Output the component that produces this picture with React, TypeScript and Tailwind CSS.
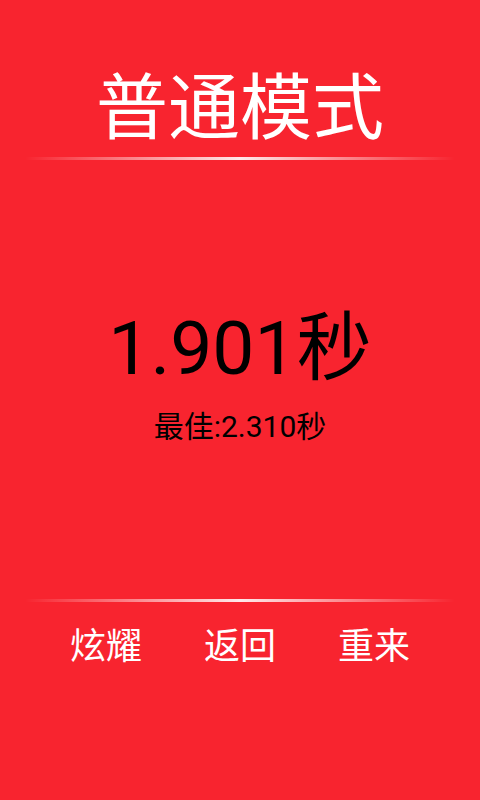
export default function App() {
  const font = { fontFamily: '"Roboto", "Noto Sans CJK SC", sans-serif' };

  return (
    <div
      className="flex h-[800px] w-[480px] flex-col items-center bg-[#f8242f]"
      style={font}
    >
      {/* Title */}
      <h1 className="mt-[69px] text-[72px] leading-[80px] font-normal text-white">
        普通模式
      </h1>
      <div className="mt-[8px] h-[3px] w-[430px] bg-gradient-to-r from-transparent via-white to-transparent opacity-90" />

      {/* Score */}
      <div className="mt-[148px] text-[75px] leading-[80px] text-black">1.901秒</div>
      <div className="mt-[22px] text-[30px] leading-[34px] text-black">最佳:2.310秒</div>

      {/* Bottom */}
      <div className="mt-[155px] h-[3px] w-[430px] bg-gradient-to-r from-transparent via-white to-transparent opacity-90" />
      <div className="mt-[23px] flex items-center gap-[62px] text-[36px] leading-[44px] text-white">
        <button className="cursor-pointer">炫耀</button>
        <button className="cursor-pointer">返回</button>
        <button className="cursor-pointer">重来</button>
      </div>
    </div>
  );
}
